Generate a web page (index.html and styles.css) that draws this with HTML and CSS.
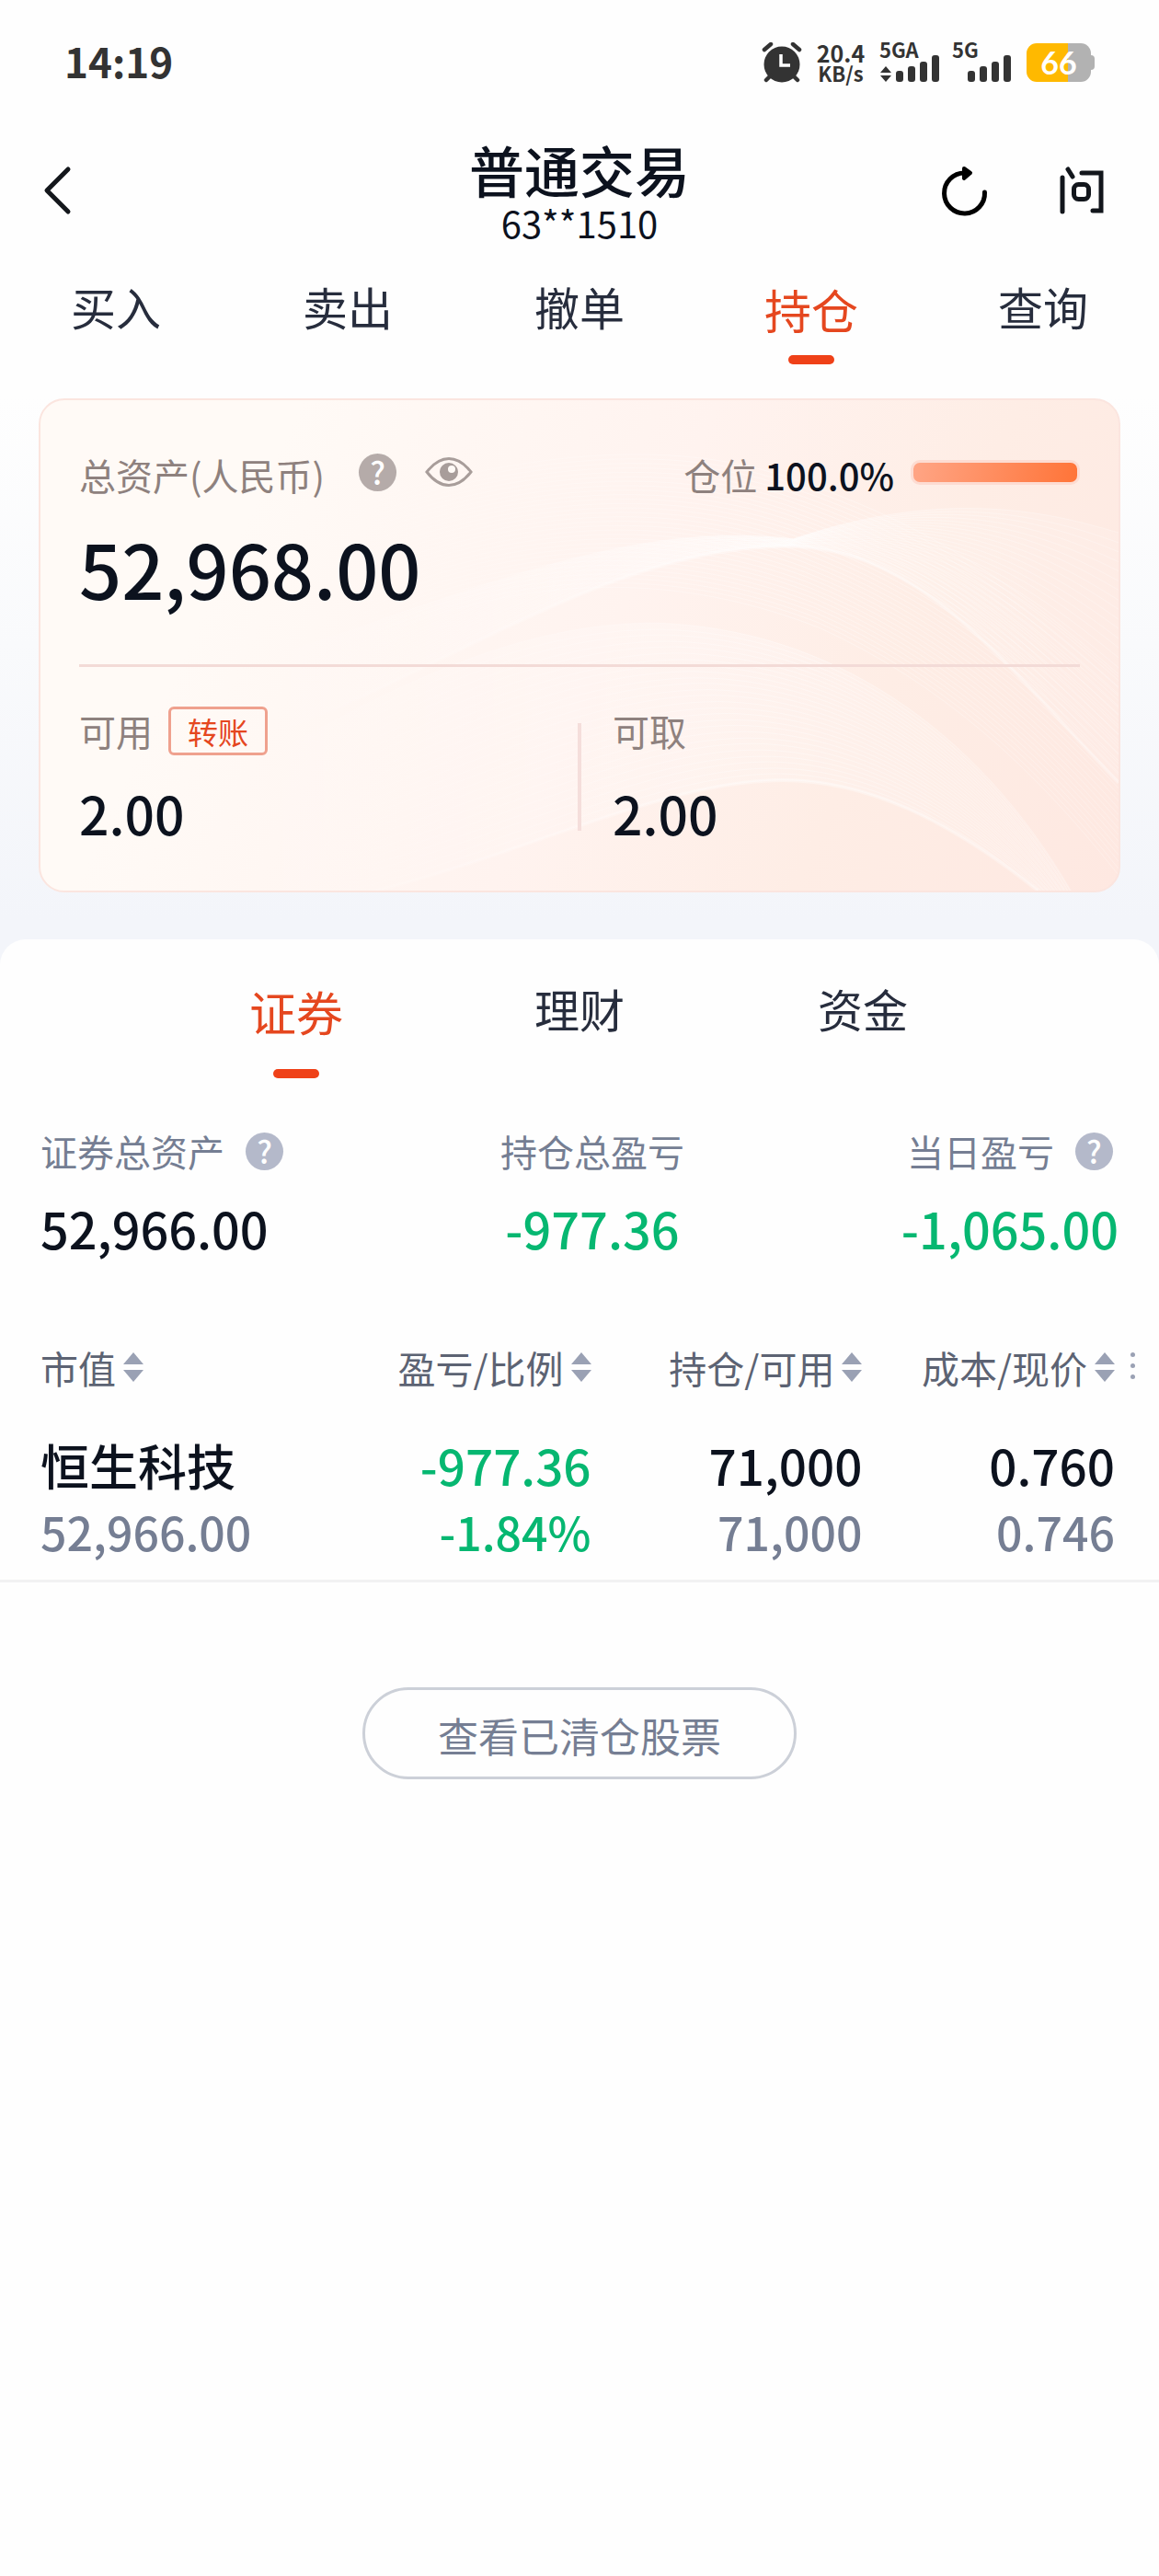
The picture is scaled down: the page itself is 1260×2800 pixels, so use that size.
FILE: index.html
```html
<!DOCTYPE html>
<html lang="zh-CN">
<head>
  <meta charset="UTF-8" />
  <meta name="viewport" content="width=device-width, initial-scale=1.0" />
  <title>普通交易</title>
  <link rel="stylesheet" href="styles.css">
</head>
<body>
  <div class="top">
    <div class="status">
      <span class="clock">14:19</span>
      <div class="status-icons">
        <svg class="alarm" width="44" height="44" viewBox="0 0 44 44">
          <circle cx="22" cy="24" r="19.5" fill="#333"/>
          <path d="M3 8l7-6M41 8l-7-6M5 41l5-5M39 41l-5-5" stroke="#333" stroke-width="4.5" stroke-linecap="round"/>
          <path d="M21 13v12h10" fill="none" stroke="#fff" stroke-width="3.5"/>
        </svg>
        <div class="speed"><span>20.4</span><small>KB/s</small></div>
        <svg class="signal" width="66" height="44" viewBox="0 0 66 44">
          <text x="0" y="17">5GA</text>
          <path d="M1 33l6-7 6 7zM1 36l6 7 6-7z" fill="#333"/>
          <g fill="#333">
            <rect x="18" y="31" width="8" height="12" rx="3"/>
            <rect x="31" y="26" width="8" height="17" rx="3"/>
            <rect x="44" y="21" width="8" height="22" rx="3"/>
            <rect x="57" y="14" width="8" height="29" rx="3"/>
          </g>
        </svg>
        <svg class="signal" width="64" height="44" viewBox="0 0 64 44">
          <text x="0" y="17">5G</text>
          <g fill="#333">
            <rect x="17" y="31" width="8" height="12" rx="3"/>
            <rect x="30" y="26" width="8" height="17" rx="3"/>
            <rect x="43" y="21" width="8" height="22" rx="3"/>
            <rect x="56" y="14" width="8" height="29" rx="3"/>
          </g>
        </svg>
        <div class="battery"><span>66</span></div>
      </div>
    </div>

    <header class="header">
      <button class="icon-btn" aria-label="返回">
        <svg width="32" height="56" viewBox="0 0 32 56"><path d="M28 5L5 28l23 23" fill="none" stroke="#14171c" stroke-width="5" stroke-linecap="round" stroke-linejoin="round"/></svg>
      </button>
      <div class="title">
        <h1>普通交易</h1>
        <p>63**1510</p>
      </div>
      <div class="header-actions">
        <button class="icon-btn" aria-label="刷新">
          <svg width="56" height="56" viewBox="0 0 56 56">
            <path d="M50.500 30A22 22 0 1 1 28.500 9h2" fill="none" stroke="#000" stroke-width="5" stroke-linecap="round"/>
            <path d="M28 4l7 5-7 6z" fill="#000" stroke="#000" stroke-width="4" stroke-linejoin="round"/>
          </svg>
        </button>
        <button class="icon-btn" aria-label="问">
          <svg width="56" height="56" viewBox="0 0 56 56" fill="none" stroke="#12161c" stroke-width="5" stroke-linecap="round">
            <path d="M7 14v37M13 5l5 8"/>
            <path d="M28 9h21v41h-9"/>
            <rect x="19.500" y="21.500" width="16" height="16" rx="5"/>
          </svg>
        </button>
      </div>
    </header>

    <nav class="tabs">
      <a href="#">买入</a>
      <a href="#">卖出</a>
      <a href="#">撤单</a>
      <a href="#" class="active">持仓</a>
      <a href="#">查询</a>
    </nav>

    <section class="card">
      <svg class="waves" viewBox="0 0 1174 537" preserveAspectRatio="none">
        <defs>
          <linearGradient id="fade" x1="0" x2="1174" gradientUnits="userSpaceOnUse">
            <stop offset="0.2" stop-color="#fff" stop-opacity="0"/>
            <stop offset="0.7" stop-color="#fff" stop-opacity="0.35"/>
            <stop offset="1" stop-color="#fff" stop-opacity="0.25"/>
          </linearGradient>
          <linearGradient id="glow" x1="0" x2="1174" gradientUnits="userSpaceOnUse">
            <stop offset="0.15" stop-color="#fff" stop-opacity="0"/>
            <stop offset="0.6" stop-color="#fff" stop-opacity="0.25"/>
            <stop offset="1" stop-color="#fff" stop-opacity="0.1"/>
          </linearGradient>
        </defs>
        <g id="waveLines" fill="none" stroke="url(#fade)"></g>
      </svg>
      <div class="card-head">
        <span class="label">总资产(人民币)</span>
        <button class="help" aria-label="总资产说明">?</button>
        <button class="icon-btn" aria-label="隐藏金额">
          <svg width="52" height="34" viewBox="0 0 52 34">
            <path d="M2 17C9 8 17 2.500 26 2.500S43 8 50 17C43 26 35 31.500 26 31.500S9 26 2 17z" fill="none" stroke="#a89d9a" stroke-width="3"/>
            <circle cx="26" cy="17" r="10" fill="#a89d9a"/>
            <circle cx="29" cy="14" r="4" fill="#fffaf6"/>
          </svg>
        </button>
        <div class="position">
          <span class="label">仓位</span>
          <strong>100.0%</strong>
          <div class="bar"><div class="bar-fill" style="width: 100%"></div></div>
        </div>
      </div>
      <div class="total">52,968.00</div>
      <div class="funds">
        <div class="fund">
          <div class="fund-label"><span class="label">可用</span><button class="transfer">转账</button></div>
          <div class="fund-value">2.00</div>
        </div>
        <div class="fund">
          <div class="fund-label"><span class="label">可取</span></div>
          <div class="fund-value">2.00</div>
        </div>
      </div>
    </section>
  </div>

  <main class="panel">
    <nav class="tabs sub-tabs">
      <a href="#" class="active">证券</a>
      <a href="#">理财</a>
      <a href="#">资金</a>
    </nav>

    <div class="summary">
      <div class="summary-item">
        <div class="summary-label">证券总资产<button class="help" aria-label="证券总资产说明">?</button></div>
        <div class="summary-value">52,966.00</div>
      </div>
      <div class="summary-item">
        <div class="summary-label">持仓总盈亏</div>
        <div class="summary-value down">-977.36</div>
      </div>
      <div class="summary-item">
        <div class="summary-label">当日盈亏<button class="help" aria-label="当日盈亏说明">?</button></div>
        <div class="summary-value down">-1,065.00</div>
      </div>
    </div>

    <div class="holdings-wrap">
      <table class="holdings">
        <thead>
          <tr>
            <th><button class="sort">市值<i></i></button></th>
            <th><button class="sort">盈亏/比例<i></i></button></th>
            <th><button class="sort">持仓/可用<i></i></button></th>
            <th><button class="sort">成本/现价<i></i></button></th>
          </tr>
        </thead>
        <tbody>
          <tr class="main-row">
            <td>恒生科技</td>
            <td class="down">-977.36</td>
            <td>71,000</td>
            <td>0.760</td>
          </tr>
          <tr class="sub-row">
            <td>52,966.00</td>
            <td class="down">-1.84%</td>
            <td>71,000</td>
            <td>0.746</td>
          </tr>
        </tbody>
      </table>
      <button class="more" aria-label="更多列"><b></b><b></b><b></b></button>
    </div>

    <button class="cleared">查看已清仓股票</button>
  </main>

  <script>
    // each wave is a fan of curves between two outlines
    const waves = [
      {
        from: [0, 330, 330, 300, 560, 120, 820, 152, 1000, 90, 1120, 130, 1174, 145],
        to: [0, 430, 330, 400, 560, 160, 812, 160, 960, 160, 1050, 290, 1174, 419],
        count: 26
      },
      {
        from: [160, 440, 380, 310, 520, 244, 670, 244, 860, 250, 1020, 360, 1122, 537],
        to: [200, 560, 420, 560, 640, 416, 808, 416, 900, 416, 990, 460, 1086, 537],
        count: 26
      },
      {
        from: [100, 200, 350, 100, 600, 20, 800, 80, 960, 130, 1060, 200, 1174, 300],
        to: [100, 420, 350, 220, 600, 150, 850, 250, 980, 310, 1080, 400, 1174, 520],
        count: 30
      }
    ];
    const group = document.getElementById('waveLines');

    function curve(p) {
      return `${p[0]} ${p[1]}C${p.slice(2, 8).join(' ')}C${p.slice(8).join(' ')}`;
    }

    function reverse(p) {
      const out = [];
      for (let i = p.length - 2; i >= 0; i -= 2) out.push(p[i], p[i + 1]);
      return out;
    }

    function addPath(d, attrs) {
      const path = document.createElementNS('http://www.w3.org/2000/svg', 'path');
      path.setAttribute('d', d);
      for (const name in attrs) path.setAttribute(name, attrs[name]);
      group.appendChild(path);
    }

    // curve() emits two bezier segments, so the middle anchor is at index 6
    waves.forEach((wave, n) => {
      if (n < 2) {
        addPath(`M${curve(wave.from)}L${curve(reverse(wave.to))}Z`, { fill: 'url(#glow)', stroke: 'none' });
      }
      for (let i = 0; i <= wave.count; i++) {
        const t = i / wave.count;
        const points = wave.from.map((v, k) => Math.round(v + (wave.to[k] - v) * t));
        addPath('M' + curve(points), { 'stroke-width': 1 });
      }
      if (n < 2) addPath('M' + curve(wave.to), { 'stroke-width': 4 });
    });
  </script>
</body>
</html>
```
FILE: styles.css
```css
:root {
  --ink: #0c121e;
  --tab: #272d3d;
  --red: #e5471f;
  --green: #06b771;
  --gray: #757e93;
  --warm-gray: #8e817e;
}
* { box-sizing: border-box; }
body {
  margin: 0;
  min-height: 100vh;
  background: #fefefe;
  color: var(--ink);
  font-family: "Noto Sans CJK SC", "Noto Sans", sans-serif;
}
a { text-decoration: none; color: inherit; }
button {
  font-family: inherit;
  border: none;
  background: none;
  padding: 0;
  color: inherit;
  cursor: pointer;
}
h1, p { margin: 0; font-weight: 400; }
svg { display: block; }

.top {
  padding-bottom: 80px;
  background: linear-gradient(#fefefe 430px, #f9fafc 700px, #f3f5fa 1000px);
}

/* status bar */
.status {
  height: 136px;
  padding: 0 74px 0 70px;
  display: flex;
  align-items: center;
  justify-content: space-between;
  color: #333;
}
.clock { font-size: 44px; line-height: 52px; padding-bottom: 4px; font-weight: 700; }
.status-icons { display: flex; align-items: center; gap: 13px; }
.speed {
  display: flex;
  flex-direction: column;
  align-items: center;
  width: 58px;
  font-weight: 700;
  font-size: 25px;
  line-height: 22px;
}
.speed small { font-size: 22px; }
.signal { overflow: visible; }
.signal text {
  font-size: 22px;
  font-weight: 700;
  fill: #333;
}
.battery {
  position: relative;
  width: 70px;
  height: 42px;
  margin-left: 4px;
  border-radius: 11px;
  background: linear-gradient(90deg, #ffb900 65%, #b2b2b2 65%);
  color: #fff;
  font: 700 34px/42px Lato, sans-serif;
  text-align: center;
}
.battery::after {
  content: "";
  position: absolute;
  left: 100%;
  top: 13px;
  width: 4px;
  height: 16px;
  border-radius: 0 4px 4px 0;
  background: #b2b2b2;
}

/* header */
.header {
  height: 144px;
  padding: 18px 56px 0 46px;
  display: grid;
  grid-template-columns: 1fr auto 1fr;
  align-items: start;
}
.header > .icon-btn, .header-actions { margin-top: 25px; }
.header > .icon-btn { justify-self: start; }
.header-actions { display: flex; justify-content: flex-end; gap: 72px; }
.title { text-align: center; padding-left: 10px; }
.title h1 { font-size: 60px; line-height: 60px; font-weight: 500; }
.title p { font-size: 40px; line-height: 56px; }

/* tabs */
.tabs { display: flex; height: 116px; }
.tabs a {
  flex: 1;
  display: flex;
  flex-direction: column;
  align-items: center;
  justify-content: space-between;
  padding-top: 21px;
  font-size: 49px;
  line-height: 64px;
  color: var(--tab);
}
.tabs .active { font-size: 51px; line-height: 70px; color: var(--red); }
.tabs .active::after {
  content: "";
  width: 50px;
  height: 10px;
  border-radius: 5px;
  background: #ef4118;
}

/* asset card */
.card {
  position: relative;
  margin: 37px 42px 0;
  padding: 50px 42px 49px;
  border: 2px solid #fbe5df;
  border-radius: 28px;
  overflow: hidden;
  background: linear-gradient(115deg, #fffaf6 20%, #fff3ef 52%, #feede5 75%, #fee8e1);
}
.waves { position: absolute; inset: 0; width: 100%; height: 100%; }
.card-head, .total, .funds { position: relative; }
.card-head { display: flex; align-items: center; height: 56px; }
.label { font-size: 40px; line-height: 56px; color: var(--warm-gray); }
.card-head .label, .card-head strong { padding-top: 6px; }
.help {
  width: 41px;
  height: 41px;
  border-radius: 50%;
  background: #b4b9ca;
  color: #fff;
  font-size: 34px;
  line-height: 40px;
  font-weight: 500;
}
.card-head .help { margin: 0 31px 0 37px; background: #b5aba9; }
.position { margin-left: auto; display: flex; align-items: center; }
.position strong { margin: 0 18px 0 8px; font-size: 40px; line-height: 56px; font-weight: 500; }
.bar {
  width: 184px;
  height: 27px;
  padding: 3px;
  border-radius: 10px;
  background: #fddcd2;
}
.bar-fill {
  height: 100%;
  border-radius: 7px;
  background: linear-gradient(100deg, #ffa585, #ff7438);
}
.total {
  margin-top: 26px;
  padding-bottom: 55px;
  border-bottom: 3px solid #f3dbd7;
  font-size: 81px;
  line-height: 100px;
  font-weight: 500;
}
.funds { display: grid; grid-template-columns: 1fr 1fr; margin-top: 41px; }
.fund { position: relative; }
.fund + .fund { padding-left: 36px; }
.fund + .fund::before {
  content: "";
  position: absolute;
  left: -2px;
  top: 20px;
  bottom: 16px;
  width: 4px;
  background: #f5dedb;
}
.fund-label { display: flex; align-items: center; height: 56px; }
.transfer {
  margin-left: 17px;
  padding: 2px 18px 0;
  height: 53px;
  border: 3px solid #efa18e;
  border-radius: 6px;
  font-size: 33px;
  line-height: 45px;
  color: var(--red);
}
.fund-value { margin-top: 25px; font-size: 57px; line-height: 72px; font-weight: 500; }

/* holdings panel */
.panel {
  margin-top: -29px;
  padding-top: 22px;
  border-radius: 28px 28px 0 0;
  background: #fefefe;
}
.sub-tabs { height: 129px; padding: 0 168px; }
.summary { display: flex; justify-content: space-between; margin-top: 51px; padding: 0 44px; }
.summary-item { text-align: center; }
.summary-item:first-child { text-align: left; }
.summary-label {
  display: flex;
  align-items: center;
  justify-content: center;
  gap: 23px;
  font-size: 40px;
  line-height: 56px;
  color: var(--gray);
}
.summary-value { margin-top: 20px; font-size: 54px; line-height: 72px; font-weight: 500; }
.summary-value.down, .holdings .down { color: var(--green); }

.holdings-wrap { position: relative; margin-top: 87px; }
.holdings { width: 100%; table-layout: fixed; border-collapse: collapse; border-bottom: 3px solid #f2f2f3; }
.holdings th, .holdings td { padding: 0; text-align: right; line-height: 72px; font-weight: 500; }
.holdings th { padding-bottom: 42px; line-height: 56px; }
.holdings th:nth-child(1) { width: 27%; }
.holdings th:nth-child(2) { width: 24%; }
.holdings th:nth-child(3) { width: 23.4%; }
.holdings tr > :first-child { padding-left: 44px; text-align: left; }
.holdings tr > :last-child { padding-right: 48px; }
.main-row td { font-size: 53px; }
.sub-row td { padding-bottom: 17px; font-size: 50px; color: var(--gray); }
.sort {
  display: inline-flex;
  align-items: center;
  gap: 8px;
  vertical-align: top;
  font-size: 41px;
  line-height: 56px;
  color: #5c6373;
}
.sort i {
  display: flex;
  flex-direction: column;
  gap: 6px;
}
.sort i::before, .sort i::after {
  content: "";
  border: 11px solid transparent;
}
.sort i::before { border-top: 0; border-bottom: 13px solid #9aa1b4; }
.sort i::after { border-bottom: 0; border-top: 13px solid #9aa1b4; }
.more {
  position: absolute;
  right: 26px;
  top: 12px;
  display: flex;
  flex-direction: column;
  gap: 7px;
}
.more b { width: 5px; height: 5px; border-radius: 50%; background: #9aa1b4; }

.cleared {
  display: block;
  margin: 114px auto 0;
  padding: 4px 79px 0;
  height: 100px;
  border: 3px solid #ccd0d8;
  border-radius: 50px;
  font-size: 44px;
  color: var(--gray);
}
```
